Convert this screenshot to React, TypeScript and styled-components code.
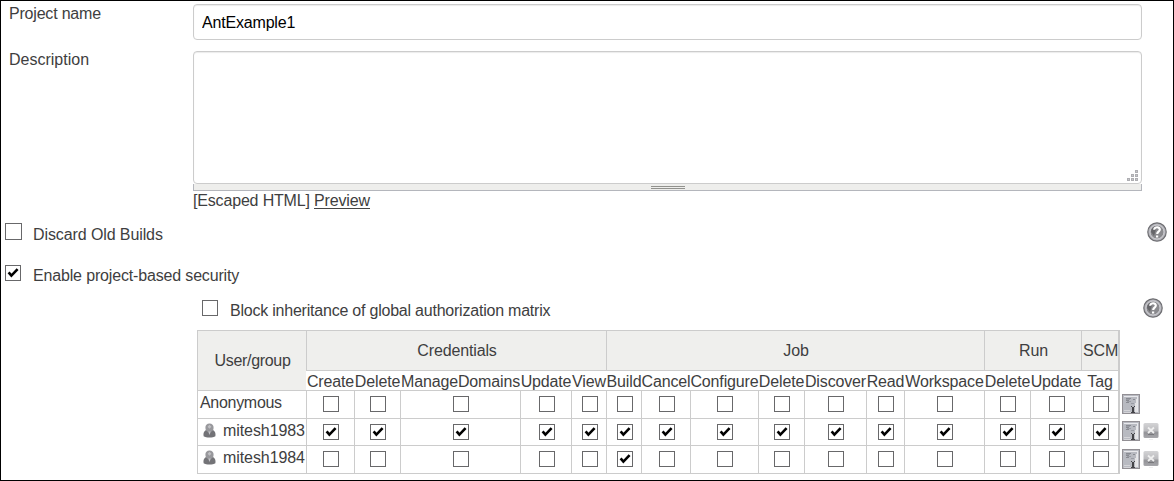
import React from "react";
import styled, { createGlobalStyle } from "styled-components";

const GlobalStyle = createGlobalStyle`
  * { box-sizing: border-box; }
  body {
    margin: 0;
    background: #fff;
    color: #3e3e40;
    font: 16px/20px "Liberation Sans", Arial, sans-serif;
  }
`;

const Page = styled.main`
  width: 1174px;
  height: 481px;
  border: 1px solid #000;
  overflow: hidden;
`;

const FieldRow = styled.div<{ $top: number; $height: number }>`
  display: grid;
  grid-template-columns: 184px 949px;
  padding-left: 8px;
  padding-top: ${(p) => p.$top}px;
  height: ${(p) => p.$height}px;
  align-items: start;
`;

const FieldLabel = styled.label<{ $tracking?: number; $line?: number }>`
  white-space: nowrap;
  line-height: ${(p) => p.$line ?? 20}px;
  letter-spacing: ${(p) => p.$tracking ?? 0}px;
`;

const TextInput = styled.input`
  width: 949px;
  height: 36px;
  padding: 1px 8px 0;
  border: 1px solid #ccc;
  border-radius: 4px;
  outline: none;
  color: #000;
  font: inherit;
  letter-spacing: -0.18px;
  box-shadow: inset 0 1px 1px #ececec;
`;

const DescriptionBox = styled.div`
  display: flex;
  justify-content: flex-end;
  align-items: flex-end;
  height: 133px;
  padding: 0 3px 2px;
  border: 1px solid #ccc;
  border-radius: 4px;
  box-shadow: inset 0 1px 1px #ececec;
`;

const ResizeBar = styled.div`
  display: flex;
  justify-content: center;
  height: 7px;
  padding-top: 2px;
  border: solid #b4b6bc;
  border-width: 0 1px 1px;
  background: #eeeeec;
`;

const Grip = styled.span`
  width: 34px;
  height: 3px;
  border: solid #92928e;
  border-width: 1px 0;
`;

const Markup = styled.div`
  white-space: nowrap;
  letter-spacing: -0.17px;
`;

const PreviewLink = styled.a`
  display: inline-block;
  height: 18px;
  line-height: 20px;
  vertical-align: top;
  border-bottom: 1px solid #444;
`;

const OptionRow = styled.div<{ $top: number; $left: number; $right: number; $height: number }>`
  display: flex;
  align-items: flex-start;
  height: ${(p) => p.$height}px;
  padding: ${(p) => p.$top}px ${(p) => p.$right}px 0 ${(p) => p.$left}px;
`;

const OptionLabel = styled.span<{ $gap: number; $drop: number; $tracking: number }>`
  flex: 1;
  margin-left: ${(p) => p.$gap}px;
  padding-top: ${(p) => p.$drop}px;
  letter-spacing: ${(p) => p.$tracking}px;
`;

const HelpSlot = styled.span<{ $drop: number }>`
  display: flex;
  margin-top: ${(p) => p.$drop}px;
`;

const Box = styled.span<{ $size: number }>`
  display: block;
  flex: none;
  width: ${(p) => p.$size}px;
  height: ${(p) => p.$size}px;
  border: 1px solid #68686a;
  background: #fff;
`;

const MatrixArea = styled.div`
  display: flex;
  align-items: flex-start;
  padding-left: 196px;
`;

const Matrix = styled.div`
  display: grid;
  grid-template-columns: 109px 48px 46px 120px 51px 35px 35px 49px 68px 46px 62px 38px 80px 46px 51px 37px;
  grid-template-rows: 40px 20px 28px 27px 28px;
  border-right: 2px solid #ccc;
  border-bottom: 1px solid #ccc;
`;

const GroupHead = styled.div<{ $cols?: number; $rows?: number; $tracking?: number }>`
  display: flex;
  align-items: center;
  justify-content: center;
  grid-column: span ${(p) => p.$cols ?? 1};
  grid-row: span ${(p) => p.$rows ?? 1};
  padding-left: 1px;
  border: solid #ccc;
  border-width: 1px 0 0 1px;
  background: #efefed;
  letter-spacing: ${(p) => p.$tracking ?? -0.15}px;
`;

const PermissionHead = styled.div`
  display: flex;
  justify-content: center;
  padding-left: 1px;
  border-top: 1px solid #ccc;
  white-space: nowrap;
  line-height: 21px;
  letter-spacing: -0.14px;
`;

const UserCell = styled.div<{ $indent: number }>`
  display: flex;
  align-items: flex-start;
  gap: 7px;
  padding: 2px 0 0 ${(p) => p.$indent}px;
  border: solid #ccc;
  border-width: 1px 0 0 1px;
  white-space: nowrap;
  letter-spacing: ${(p) => (p.$indent > 2 ? -0.08 : -0.3)}px;

  svg { margin-top: 2px; }
`;

const CheckCell = styled.div`
  display: flex;
  justify-content: center;
  padding: 5px 0 0 1px;
  border: solid #ccc;
  border-width: 1px 0 0 1px;
`;

const Actions = styled.div`
  display: grid;
  grid-template-rows: 27px 28px 28px;
  padding: 64px 0 0 2px;
`;

const ActionRow = styled.div`
  display: flex;
  align-items: flex-start;
  gap: 3px;

  svg + svg { margin-top: 1px; }
`;

const Checkbox = ({ checked = false, size = 16 }: { checked?: boolean; size?: number }) => (
  <Box $size={size} role="checkbox" aria-checked={checked}>
    {checked && (
      <svg width="14" height="14" viewBox="0 0 14 14" style={{ display: "block" }}>
        <path d="M2.6 6.3 5.4 9.6 11.6 3.2" fill="none" stroke="#000" strokeWidth="2.6" />
      </svg>
    )}
  </Box>
);

const HelpIcon = () => (
  <svg width="20" height="20" viewBox="0 0 20 20">
    <circle cx="10" cy="10" r="9.2" fill="#b4b4ba" stroke="#6e6e72" strokeWidth="1.2" />
    <circle cx="10" cy="10" r="7" fill="#8a8a8e" stroke="#d6d6da" strokeWidth="0.9" />
    <path d="M4 10a6 6 0 0 1 6-6l-3 10z" fill="#66666a" />
    <path d="M7.2 7.7C7.2 4.3 13 4.5 12.8 7.8c-.1 1.9-2.6 2-2.6 4.1M10.1 13.4v2" fill="none" stroke="#fff" strokeWidth="2.2" />
  </svg>
);

const UserIcon = () => (
  <svg width="13" height="15" viewBox="0 0 13 15">
    <path d="M.6 13.2C0 10 1.2 8 3 7h7c1.8 1 3 3 2.4 6.2-2.2 1.7-9.6 1.7-11.8 0z" fill="#737377" />
    <path d="M2.4 5C2.2 2 4 .4 6.5.4S10.8 2 10.6 5C10.5 7.6 9 9 6.5 9S2.5 7.6 2.4 5z" fill="#98989c" />
    <path d="M4.6 3.8 6.5 1.8l1.9 2-1.9 2z" fill="#bfbfc3" />
    <path d="M5.2 8.6h2.6L6.5 12z" fill="#c4c4c8" />
  </svg>
);

const SelectAllIcon = () => (
  <svg width="18" height="20" viewBox="0 0 18 20" shapeRendering="crispEdges">
    <rect x=".5" y=".5" width="17" height="19" fill="#b8bac1" stroke="#928f94" />
    <path d="M2 2.5h14M15.5 3v15" stroke="#e8e8ec" fill="none" />
    <path d="M14.5 5v13M13.5 9v9" stroke="#e4e4e6" fill="none" />
    <path d="M4 4.5h5M4 6.5h3M4 8.5h3M11 5.5h2" stroke="#898b92" />
    <path d="M4 5.5h4M5 7.5h4M9 9.5h3" stroke="#9a9ca4" />
    <path d="M2 16.5h6M2 18.5h7" stroke="#d4d4d8" />
    <path d="M9 12.5h1M12 12.5h1M10 13.5h2M9 18.5h4" stroke="#444448" />
    <path d="M10.5 13v5M11.5 13v5" stroke="#444448" />
  </svg>
);

const RemoveIcon = () => (
  <svg width="16" height="18" viewBox="0 0 16 18">
    <defs>
      <linearGradient id="removeShade" x1="0" y1="0" x2="0" y2="1">
        <stop offset="0" stopColor="#d4d4d6" />
        <stop offset=".5" stopColor="#bcbcbf" />
        <stop offset=".65" stopColor="#929296" />
        <stop offset="1" stopColor="#a8a8ac" />
      </linearGradient>
    </defs>
    <rect x=".5" y="1" width="15" height="15" rx="1.5" fill="url(#removeShade)" />
    <path d="M5 5.5l6 5.5M11 5.5 5 11" stroke="#efefef" strokeWidth="1.8" />
    <path d="M5 12.5h6" stroke="#77777b" />
    <path d="M6 17.5h4" stroke="#eeeeef" />
  </svg>
);

const groups = [
  { name: "Credentials", permissions: ["Create", "Delete", "ManageDomains", "Update", "View"] },
  { name: "Job", permissions: ["Build", "Cancel", "Configure", "Delete", "Discover", "Read", "Workspace"] },
  { name: "Run", permissions: ["Delete", "Update"] },
  { name: "SCM", permissions: ["Tag"] },
];

const permissions = groups.flatMap((g) => g.permissions.map((p) => ({ group: g.name, name: p })));

const users = [
  { name: "Anonymous", removable: false, granted: () => false },
  { name: "mitesh1983", removable: true, granted: () => true },
  { name: "mitesh1984", removable: true, granted: (p: string) => p === "Build" },
];

export default function App() {
  return (
    <Page>
      <GlobalStyle />
      <FieldRow $top={3} $height={50}>
        <FieldLabel $tracking={-0.2}>Project name</FieldLabel>
        <TextInput defaultValue="AntExample1" />
      </FieldRow>
      <FieldRow $top={0} $height={165}>
        <FieldLabel $line={18}>Description</FieldLabel>
        <div>
          <DescriptionBox>
            <svg width="11" height="11" viewBox="0 0 11 11" shapeRendering="crispEdges">
              {[[8, 0], [4, 4], [8, 4], [0, 8], [4, 8], [8, 8]].map(([x, y]) => (
                <rect key={`${x}-${y}`} x={x + 0.5} y={y + 0.5} width="2" height="2" fill="#c9c9cc" stroke="#aeaeb2" />
              ))}
            </svg>
          </DescriptionBox>
          <ResizeBar><Grip /></ResizeBar>
          <Markup>[Escaped HTML] <PreviewLink>Preview</PreviewLink></Markup>
        </div>
      </FieldRow>
      <OptionRow $top={7} $left={4} $right={6} $height={41}>
        <Checkbox size={17} />
        <OptionLabel $gap={11} $drop={2} $tracking={-0.1}>Discard Old Builds</OptionLabel>
        <HelpSlot $drop={-1}><HelpIcon /></HelpSlot>
      </OptionRow>
      <OptionRow $top={8} $left={4} $right={6} $height={42}>
        <Checkbox checked />
        <OptionLabel $gap={12} $drop={1} $tracking={-0.16}>Enable project-based security</OptionLabel>
      </OptionRow>
      <OptionRow $top={0} $left={201} $right={10} $height={31}>
        <HelpSlot $drop={1}><Checkbox /></HelpSlot>
        <OptionLabel $gap={12} $drop={2} $tracking={-0.22}>Block inheritance of global authorization matrix</OptionLabel>
        <HelpSlot $drop={-1}><HelpIcon /></HelpSlot>
      </OptionRow>
      <MatrixArea>
        <Matrix>
          <GroupHead $rows={2} $tracking={-0.3}>User/group</GroupHead>
          {groups.map((g) => (
            <GroupHead key={g.name} $cols={g.permissions.length}>{g.name}</GroupHead>
          ))}
          {permissions.map((p) => (
            <PermissionHead key={p.group + p.name}>{p.name}</PermissionHead>
          ))}
          {users.map((u) => (
            <React.Fragment key={u.name}>
              <UserCell $indent={u.removable ? 5 : 2}>
                {u.removable && <UserIcon />}
                {u.name}
              </UserCell>
              {permissions.map((p) => (
                <CheckCell key={p.group + p.name}>
                  <Checkbox checked={u.granted(p.name)} />
                </CheckCell>
              ))}
            </React.Fragment>
          ))}
        </Matrix>
        <Actions>
          {users.map((u) => (
            <ActionRow key={u.name}>
              <SelectAllIcon />
              {u.removable && <RemoveIcon />}
            </ActionRow>
          ))}
        </Actions>
      </MatrixArea>
    </Page>
  );
}
